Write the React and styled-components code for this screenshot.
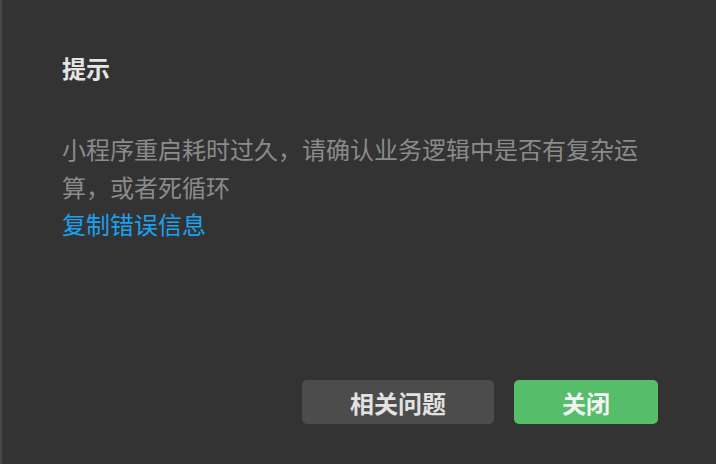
import React from "react";
import styled, { createGlobalStyle } from "styled-components";

const Global = createGlobalStyle`
  html, body { margin: 0; padding: 0; background: #333333; }
  #root { height: 100vh; }
`;

const Dialog = styled.div`
  box-sizing: border-box;
  height: 464px;
  width: 716px;
  background: #333333;
  border-left: 2px solid #474747;
  display: flex;
  flex-direction: column;
  padding: 50px 58px 40px 60px;
  font-family: "Noto Sans CJK SC", "Noto Sans", sans-serif;
`;

const Title = styled.h1`
  margin: 0;
  font-size: 24px;
  line-height: 36px;
  font-weight: 700;
  color: #e4e4e4;
`;

const Body = styled.div`
  margin-top: 44px;
  width: 592px;
  font-size: 24px;
  line-height: 37.5px;
  color: #8b8b8b;
`;

const Link = styled.a`
  display: block;
  color: #1aa1ef;
  text-decoration: none;
  cursor: pointer;
`;

const Footer = styled.div`
  margin-top: auto;
  display: flex;
  justify-content: flex-end;
  gap: 20px;
`;

const Button = styled.button`
  width: ${(p) => p.$width}px;
  height: 44px;
  border: none;
  border-radius: 5px;
  padding: 0;
  font-family: inherit;
  font-size: 24px;
  font-weight: 700;
  background: ${(p) => (p.$primary ? "#56bd6b" : "#4c4c4c")};
  color: ${(p) => (p.$primary ? "#f4f4f4" : "#e2e2e2")};
  cursor: pointer;
`;

export default function App() {
  return (
    <>
      <Global />
      <Dialog>
        <Title>提示</Title>
        <Body>
          小程序重启耗时过久，请确认业务逻辑中是否有复杂运算，或者死循环
          <Link>复制错误信息</Link>
        </Body>
        <Footer>
          <Button $width={192}>相关问题</Button>
          <Button $width={144} $primary>关闭</Button>
        </Footer>
      </Dialog>
    </>
  );
}
